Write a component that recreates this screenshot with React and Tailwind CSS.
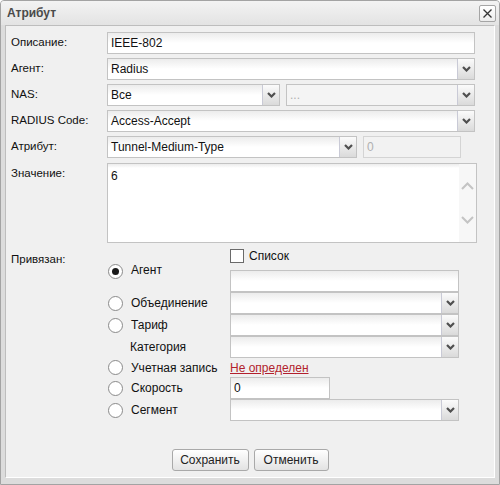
import React from "react";

const font = { fontFamily: '"Liberation Sans", Arial, sans-serif' };

function Chevron({ light }) {
  if (light) {
    return (
      <svg width="13" height="8" viewBox="0 0 13 8">
        <path d="M1 1 L6.5 6.5 L12 1" fill="none" stroke="#c4c4c4" strokeWidth="2" />
      </svg>
    );
  }
  return (
    <svg width="9" height="6" viewBox="0 0 9 6">
      <path d="M1 1 L4.5 4.5 L8 1" fill="none" stroke="#4f4f4f" strokeWidth="2.2" />
    </svg>
  );
}

function Arrow() {
  return (
    <div className="w-[17px] shrink-0 flex items-center justify-center border-l border-[#c9cad6] bg-gradient-to-b from-[#fbfbfb] to-[#dadada]">
      <Chevron />
    </div>
  );
}

function Select({ value, className = "", disabled }) {
  return (
    <div className={`flex h-[22px] border border-[#c3c3c3] ${className}`}>
      <div
        className={`flex-1 min-w-0 flex items-center px-[3px] text-[12px] ${
          disabled ? "bg-[#f4f4f4] text-[#b0b0b0]" : "bg-gradient-to-b from-[#ececec] via-white to-white text-[#111]"
        }`}
      >
        {value}
      </div>
      <Arrow />
    </div>
  );
}

function Input({ value, className = "", disabled }) {
  return (
    <div
      className={`h-[22px] border flex items-center px-[3px] text-[12px] ${
        disabled
          ? "border-[#d4d4d4] bg-[#f2f2f2] text-[#b0b0b0]"
          : "border-[#c3c3c3] bg-gradient-to-b from-[#ececec] via-white to-white text-[#111]"
      } ${className}`}
    >
      {value}
    </div>
  );
}

function Radio({ checked }) {
  return (
    <div className="w-[15px] h-[15px] rounded-full border border-[#8a8a8a] bg-white flex items-center justify-center shrink-0">
      {checked && <div className="w-[7px] h-[7px] rounded-full bg-[#1a1a1a]" />}
    </div>
  );
}

function Row({ label, children }) {
  return (
    <div className="flex items-center">
      <div className="w-[96px] text-[11.5px] text-[#111]">{label}</div>
      <div className="flex-1">{children}</div>
    </div>
  );
}

function Button({ children, className = "" }) {
  return (
    <button
      className={`h-[22px] rounded-[3px] border border-[#a9a9a9] bg-gradient-to-b from-white to-[#e3e3e3] text-[12px] text-[#222] ${className}`}
    >
      {children}
    </button>
  );
}

export default function App() {
  return (
    <div className="w-[500px] h-[485px] bg-[#dcdcdc] border border-[#a3a3a3] rounded-t-[4px] flex flex-col overflow-hidden" style={font}>
      {/* header */}
      <div className="h-[24px] shrink-0 flex items-center justify-between pl-[6px] pr-[3px] bg-gradient-to-b from-[#f3f3f3] to-[#e3e3e3]">
        <span className="text-[12px] font-bold text-[#4a4a4a]">Атрибут</span>
        <div className="w-[17px] h-[17px] border border-[#a5a5a5] rounded-[2px] bg-gradient-to-b from-white to-[#ececec] flex items-center justify-center">
          <svg width="11" height="11" viewBox="0 0 11 11">
            <path d="M1.5 1.5 L9.5 9.5 M9.5 1.5 L1.5 9.5" stroke="#333" strokeWidth="1.3" />
          </svg>
        </div>
      </div>

      {/* panel */}
      <div className="flex-1 mx-[4px] mb-[6px] border-l border-t border-[#bdbdbd] border-b border-r border-b-white border-r-white bg-[#f0f0f0] pl-[5px] pr-[19px] pt-[6px] flex flex-col">
        <div className="flex flex-col gap-[4px]">
          <Row label="Описание:">
            <Input value="IEEE-802" />
          </Row>
          <Row label="Агент:">
            <Select value="Radius" />
          </Row>
          <Row label="NAS:">
            <div className="flex gap-[6px]">
              <Select value="Все" className="w-[173px]" />
              <Select value="..." className="flex-1" disabled />
            </div>
          </Row>
          <Row label="RADIUS Code:">
            <Select value="Access-Accept" />
          </Row>
          <Row label="Атрибут:">
            <div className="flex gap-[6px]">
              <Select value="Tunnel-Medium-Type" className="w-[250px]" />
              <Input value="0" className="w-[98px]" disabled />
            </div>
          </Row>
          <div className="flex mt-[1px]">
            <div className="w-[96px] text-[11.5px] text-[#111] pt-[2px]">Значение:</div>
            <div className="flex-1 mr-[-2px] h-[80px] border border-[#c3c3c3] bg-white flex">
              <div className="flex-1 px-[3px] pt-[3px] text-[12px] text-[#111] bg-gradient-to-b from-[#ececec] via-white to-white bg-[length:100%_8px] bg-no-repeat">
                6
              </div>
              <div className="w-[17px] bg-[#f7f7f7] flex flex-col items-center justify-center gap-[26px]">
                <div className="rotate-180">
                  <Chevron light />
                </div>
                <Chevron light />
              </div>
            </div>
          </div>
        </div>

        {/* Привязан */}
        <div className="flex mt-[5px]">
          <div className="w-[96px] text-[11.5px] text-[#111] pt-[3px]">Привязан:</div>
          <div className="grid grid-cols-[123px_229px] text-[12px] text-[#111]">
            <div />
            <div className="flex items-center gap-[5px] h-[16px]">
              <div className="w-[14px] h-[14px] border border-[#6a6a6a] bg-white" />
              <span>Список</span>
            </div>

            <div className="flex items-start gap-[8px] pl-[1px]">
              <Radio checked />
              <span className="leading-[13px]">Агент</span>
            </div>
            <div className="pt-[6px]">
              <Input value="" />
            </div>

            <div className="flex items-center gap-[8px] pl-[1px]">
              <Radio />
              <span>Объединение</span>
            </div>
            <Select value="" />

            <div className="flex items-center gap-[8px] pl-[1px]">
              <Radio />
              <span>Тариф</span>
            </div>
            <Select value="" />

            <div className="flex items-center pl-[23px]">
              <span>Категория</span>
            </div>
            <Select value="" />

            <div className="flex items-center gap-[8px] pl-[1px] h-[19px]">
              <Radio />
              <span>Учетная запись</span>
            </div>
            <div className="flex items-center h-[19px]">
              <a className="text-[#b21f2d] underline">Не определен</a>
            </div>

            <div className="flex items-center gap-[8px] pl-[1px]">
              <Radio />
              <span>Скорость</span>
            </div>
            <Input value="0" className="w-[100px]" />

            <div className="flex items-center gap-[8px] pl-[1px]">
              <Radio />
              <span>Сегмент</span>
            </div>
            <Select value="" />
          </div>
        </div>

        <div className="flex-1" />
        <div className="flex justify-center gap-[5px] mb-[6px] pl-[14px]">
          <Button className="w-[77px]">Сохранить</Button>
          <Button className="w-[75px]">Отменить</Button>
        </div>
      </div>
    </div>
  );
}
